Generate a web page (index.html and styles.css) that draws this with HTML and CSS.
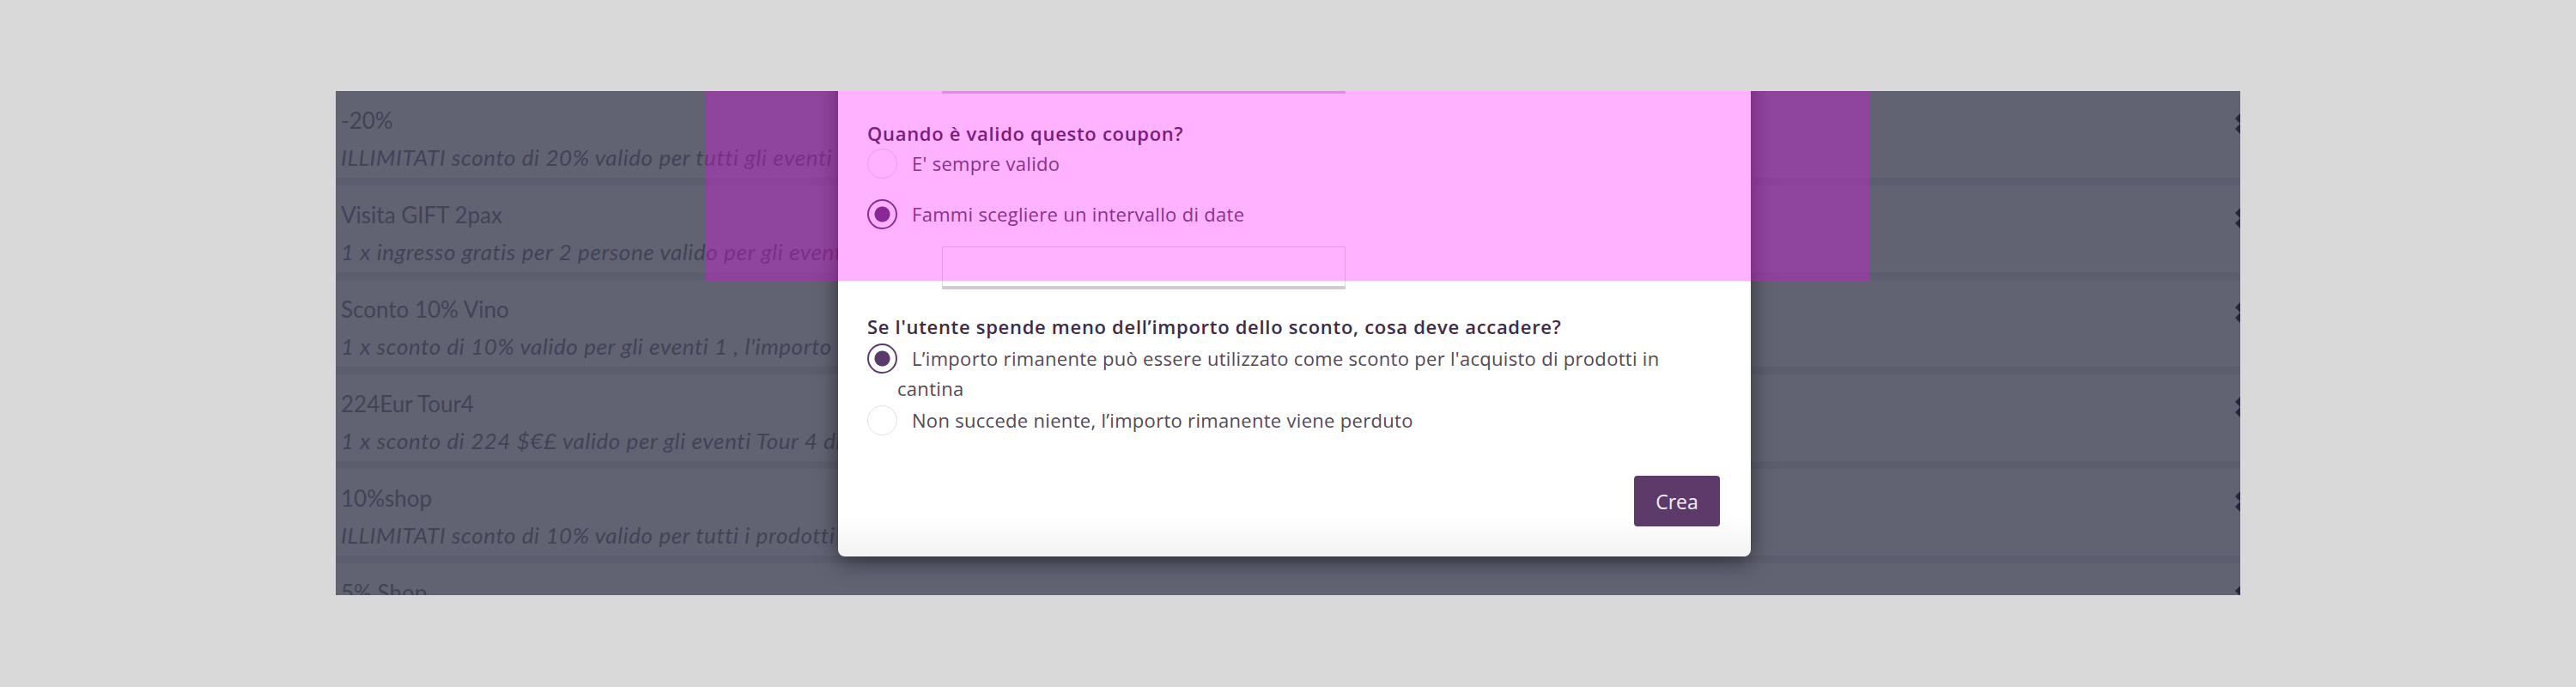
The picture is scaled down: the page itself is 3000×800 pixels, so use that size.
FILE: index.html
```html
<!DOCTYPE html>
<html lang="it">
<head>
<meta charset="utf-8">
<title>Coupon</title>
<link rel="stylesheet" href="styles.css">
</head>
<body>
<div class="frame">
  <ul class="coupon-list">
    <li class="coupon">
      <div class="coupon-text">
        <div class="coupon-title">-20%</div>
        <div class="coupon-desc">ILLIMITATI sconto di 20% valido per tutti gli eventi</div>
      </div>
      <svg class="handle" viewBox="0 0 12 24"><path d="M6 0 L12 6 L6 12 L0 6 Z M6 12 L12 18 L6 24 L0 18 Z"/></svg>
    </li>
    <li class="coupon">
      <div class="coupon-text">
        <div class="coupon-title">Visita GIFT 2pax</div>
        <div class="coupon-desc">1 x ingresso gratis per 2 persone valido per gli eventi</div>
      </div>
      <svg class="handle" viewBox="0 0 12 24"><path d="M6 0 L12 6 L6 12 L0 6 Z M6 12 L12 18 L6 24 L0 18 Z"/></svg>
    </li>
    <li class="coupon">
      <div class="coupon-text">
        <div class="coupon-title">Sconto 10% Vino</div>
        <div class="coupon-desc">1 x sconto di 10% valido per gli eventi 1 , l'importo</div>
      </div>
      <svg class="handle" viewBox="0 0 12 24"><path d="M6 0 L12 6 L6 12 L0 6 Z M6 12 L12 18 L6 24 L0 18 Z"/></svg>
    </li>
    <li class="coupon">
      <div class="coupon-text">
        <div class="coupon-title">224Eur Tour4</div>
        <div class="coupon-desc">1 x sconto di 224 $€£ valido per gli eventi Tour 4 di</div>
      </div>
      <svg class="handle" viewBox="0 0 12 24"><path d="M6 0 L12 6 L6 12 L0 6 Z M6 12 L12 18 L6 24 L0 18 Z"/></svg>
    </li>
    <li class="coupon">
      <div class="coupon-text">
        <div class="coupon-title">10%shop</div>
        <div class="coupon-desc">ILLIMITATI sconto di 10% valido per tutti i prodotti</div>
      </div>
      <svg class="handle" viewBox="0 0 12 24"><path d="M6 0 L12 6 L6 12 L0 6 Z M6 12 L12 18 L6 24 L0 18 Z"/></svg>
    </li>
    <li class="coupon">
      <div class="coupon-text">
        <div class="coupon-title">5% Shop</div>
        <div class="coupon-desc">ILLIMITATI sconto di 5% valido</div>
      </div>
      <svg class="handle" viewBox="0 0 12 24"><path d="M6 0 L12 6 L6 12 L0 6 Z M6 12 L12 18 L6 24 L0 18 Z"/></svg>
    </li>
  </ul>

  <div class="backdrop"></div>

  <div class="modal">
    <div class="field field-prev"></div>
    <h3 class="question">Quando è valido questo coupon?</h3>
    <label class="option"><span class="radio"></span>E' sempre valido</label>
    <label class="option option-second"><span class="radio checked"></span>Fammi scegliere un intervallo di date</label>
    <div class="field field-dates"></div>
    <h3 class="question question-second">Se l'utente spende meno dell’importo dello sconto, cosa deve accadere?</h3>
    <label class="option option-wrap"><span class="radio checked"></span>L’importo rimanente può essere utilizzato come sconto per l'acquisto di prodotti in cantina</label>
    <label class="option option-last"><span class="radio"></span>Non succede niente, l’importo rimanente viene perduto</label>
    <div class="actions"><button class="btn-create">Crea</button></div>
  </div>

  <div class="highlight"></div>
</div>
</body>
</html>
```

FILE: styles.css
```css
html, body {
  margin: 0;
  padding: 0;
}

body {
  background: #d9d9d9;
  font-family: Lato, "Noto Sans", sans-serif;
  width: 3000px;
  height: 800px;
}

.frame {
  position: relative;
  margin: 106px 0 0 391px;
  width: 2218px;
  height: 587px;
  overflow: hidden;
  background: #f1f1f3;
}

/* ---------- list under the backdrop ---------- */
.coupon-list {
  list-style: none;
  margin: 0;
  padding: 0;
}

.coupon {
  display: flex;
  justify-content: space-between;
  align-items: flex-start;
  height: 101px;
  margin-bottom: 9px;
  padding: 18px 0 0 6px;
  box-sizing: border-box;
  background: #ffffff;
}

.coupon-title {
  font-size: 26px;
  line-height: 32px;
  color: #a3a3ab;
  white-space: nowrap;
}

.coupon-desc {
  margin-top: 12px;
  font-size: 26px;
  line-height: 30px;
  letter-spacing: 0.6px;
  font-style: italic;
  color: #a3a3ab;
  white-space: nowrap;
}

.handle {
  flex: none;
  width: 12px;
  height: 24px;
  margin-top: 8px;
  margin-right: -6px;
  fill: #55566a;
}

.backdrop {
  position: absolute;
  inset: 0;
  background: rgba(12, 15, 40, 0.65);
}

/* ---------- modal ---------- */
.modal {
  position: absolute;
  left: 585px;
  top: -80px;
  width: 1063px;
  box-sizing: border-box;
  padding: 33px 36px 35px 34px;
  background: linear-gradient(to bottom, #ffffff calc(100% - 48px), #f3f3f3 100%);
  border-radius: 8px;
  box-shadow: 0 6px 26px rgba(0, 0, 0, 0.5);
  color: #554858;
  font-family: "Open Sans", Lato, sans-serif;
}

.field {
  width: 470px;
  height: 50px;
  margin-left: 87px;
  box-sizing: border-box;
  border: 1px solid #dcdcdc;
  border-bottom: 4px solid #cdcdcd;
  background: #ffffff;
}

.field-dates {
  margin-top: 20px;
}

.question {
  margin: 31px 0 0 0;
  font-size: 22px;
  line-height: 30px;
  letter-spacing: 0.7px;
  font-weight: 600;
  color: #3e2b44;
}

.question-second {
  margin-top: 28px;
}

.option {
  display: block;
  margin-top: 3px;
  padding-left: 35px;
  font-size: 22px;
  line-height: 35px;
  letter-spacing: 0.3px;
  color: #554858;
}

.option-second {
  margin-top: 24px;
}

.option-wrap {
  margin-top: 5px;
  max-width: 925px;
}

.option-last {
  margin-top: 2px;
}

.radio {
  display: inline-block;
  vertical-align: top;
  width: 35px;
  height: 35px;
  margin-left: -35px;
  margin-right: 17px;
  box-sizing: border-box;
  border: 1.5px solid #dde4e3;
  border-radius: 50%;
  background: #ffffff;
}

.radio.checked {
  border: 2px solid #5d3c6d;
  background: radial-gradient(circle, #5a3a6b 0 8.5px, #ffffff 9.5px);
}

.actions {
  display: flex;
  justify-content: flex-end;
  margin-top: 47px;
}

.btn-create {
  width: 100px;
  height: 59px;
  border: none;
  border-radius: 4px;
  background: #5c3b6b;
  color: #f3eff5;
  font-family: "Open Sans", Lato, sans-serif;
  font-size: 23px;
}

/* ---------- pink inspection highlight ---------- */
.highlight {
  position: absolute;
  left: 431px;
  top: 0;
  width: 1355px;
  height: 221px;
  background: rgba(255, 0, 255, 0.3);
}
```
